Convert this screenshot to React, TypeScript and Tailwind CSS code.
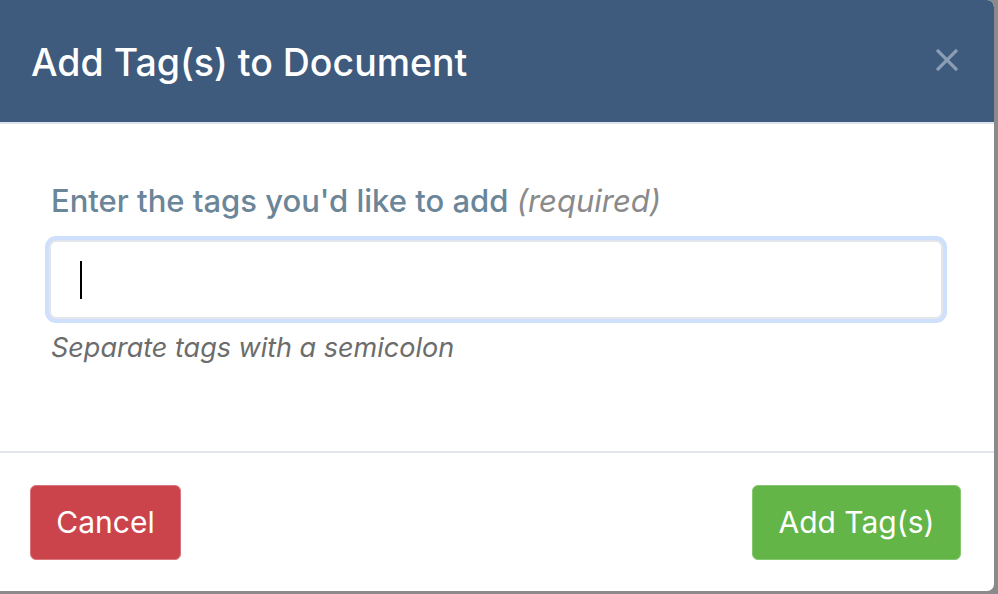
export default function App() {
  return (
    <div className="flex h-[594px] w-[998px] items-start bg-[#8a8a8a]">
      <div className="flex h-[591px] w-[994px] flex-col overflow-hidden rounded-tr-[7px] rounded-br-[7px] bg-white">
        <div className="flex h-[124px] shrink-0 items-center justify-between border-b-2 border-[#dde3ea] bg-[#3e5a7c] pl-[31px] pr-[36px]">
          <h4 className="mt-[3px] font-['Inter',sans-serif] text-[37.5px] font-medium leading-none text-white">
            Add Tag(s) to Document
          </h4>
          <svg width="22" height="24" viewBox="0 0 22 24" className="mt-[-2px]">
            <path d="M1 2 L21 22 M21 2 L1 22" stroke="#8a9db5" strokeWidth="3.2" />
          </svg>
        </div>
        <div className="flex-1 px-[45px] pt-[61px]">
          <label className="block pl-[6px] font-['Inter',sans-serif] text-[31px] font-medium leading-none text-[#6b8599]">
            Enter the tags you'd like to add{" "}
            <span className="font-normal italic text-[#8a8a8a]">(required)</span>
          </label>
          <div className="mt-[20px] h-[87px] w-[902px] rounded-[11px] bg-[#cfe0fc] p-[4px]">
            <div className="flex h-full items-center rounded-[7px] border-2 border-[#e2e5e9] bg-white pl-[29px]">
              <div className="h-[38px] w-[2px] bg-black" />
            </div>
          </div>
          <p className="mt-[11px] pl-[6px] font-['Inter',sans-serif] text-[27px] italic leading-none text-[#6c6c6c]">
            Separate tags with a semicolon
          </p>
        </div>
        <div className="flex h-[140px] shrink-0 items-center justify-between border-t-2 border-[#e2e5e9] pl-[30px] pr-[33px]">
          <button className="h-[75px] w-[151px] rounded-[6px] border border-[#d9767b] bg-[#cc444b] font-['Inter',sans-serif] text-[30px] text-white">
            Cancel
          </button>
          <button className="h-[75px] w-[209px] rounded-[6px] border border-[#86c870] bg-[#62b546] font-['Inter',sans-serif] text-[30px] text-white">
            Add Tag(s)
          </button>
        </div>
      </div>
    </div>
  );
}
